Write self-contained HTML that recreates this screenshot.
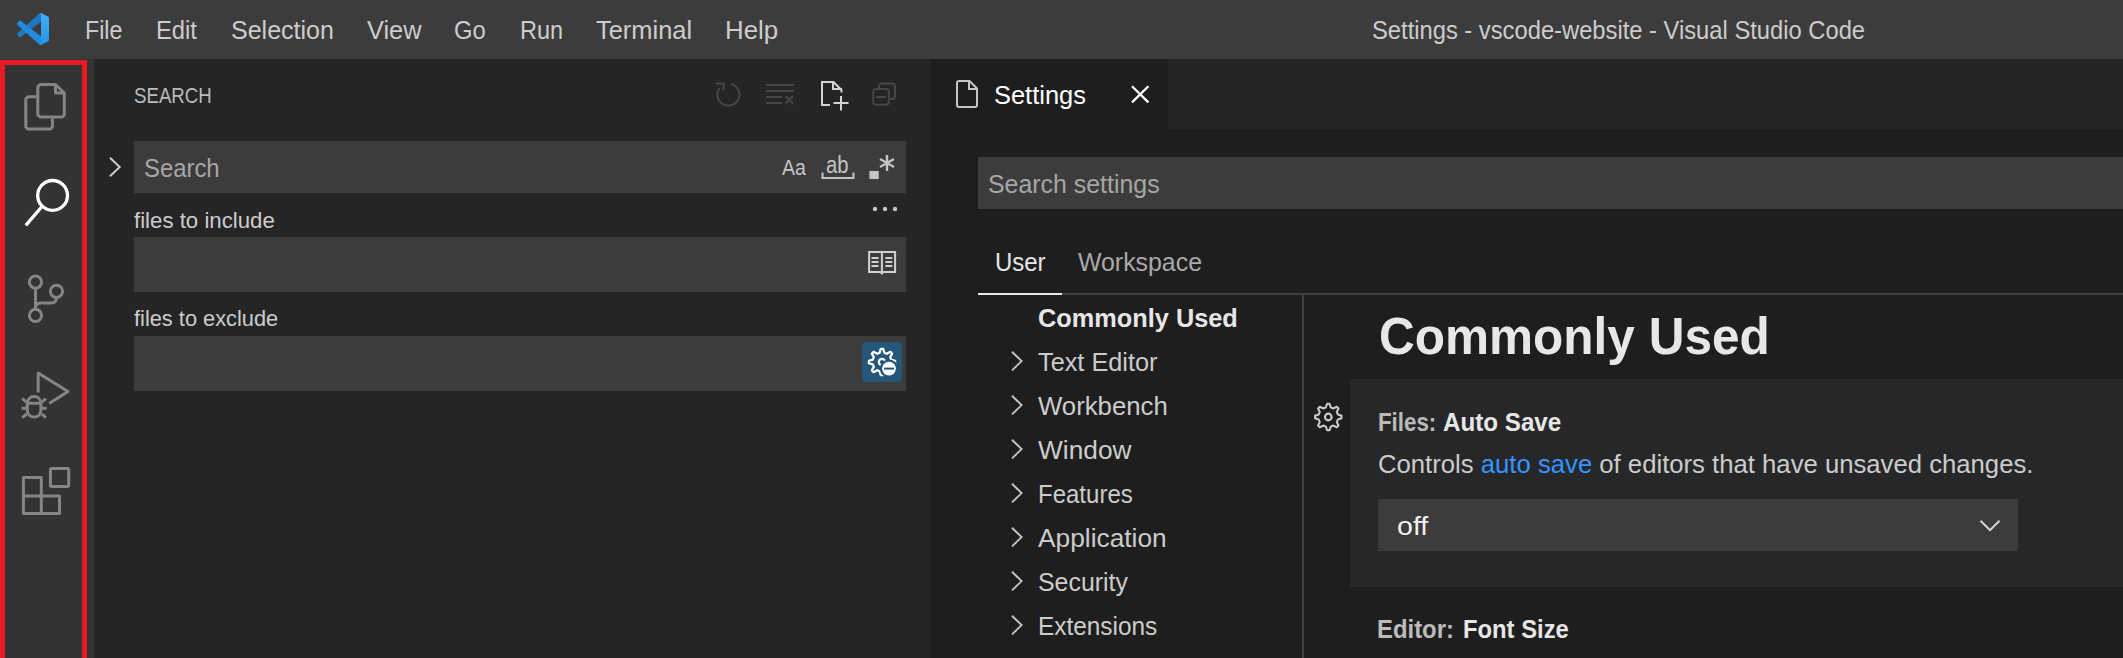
<!DOCTYPE html>
<html><head><meta charset="utf-8"><title>Settings - vscode-website - Visual Studio Code</title>
<style>
html,body{margin:0;padding:0;width:2123px;height:658px;overflow:hidden;background:#1e1e1e;}
body{position:relative;font-family:"Liberation Sans",sans-serif;}
.r{position:absolute;}
.t{position:absolute;white-space:nowrap;line-height:1;transform-origin:0 0;font-family:"Liberation Sans",sans-serif;}
svg.ov{position:absolute;left:0;top:0;}
</style></head><body>
<!-- backgrounds -->
<div class="r" style="left:0;top:0;width:2123px;height:59px;background:#3c3c3c"></div>
<div class="r" style="left:0;top:59px;width:94px;height:599px;background:#333333"></div>
<div class="r" style="left:94px;top:59px;width:836px;height:599px;background:#252526"></div>
<div class="r" style="left:930px;top:59px;width:1193px;height:70px;background:#252526"></div>
<div class="r" style="left:930px;top:59px;width:238px;height:70px;background:#1e1e1e"></div>
<!-- red highlight box -->
<div class="r" style="left:0;top:60px;width:77px;height:610px;border:5px solid #e81b23;"></div>
<!-- inputs -->
<div class="r" style="left:134px;top:141px;width:772px;height:52px;background:#3c3c3c"></div>
<div class="r" style="left:134px;top:237px;width:772px;height:55px;background:#3c3c3c"></div>
<div class="r" style="left:134px;top:336px;width:772px;height:55px;background:#3c3c3c"></div>
<div class="r" style="left:862px;top:342px;width:40px;height:40px;border-radius:4px;background:#245779"></div>
<div class="r" style="left:978px;top:157px;width:1145px;height:52px;background:#3c3c3c"></div>
<!-- settings tabs border -->
<div class="r" style="left:978px;top:293px;width:1145px;height:2px;background:#3e3e3e"></div>
<div class="r" style="left:978px;top:293px;width:84px;height:2px;background:#e7e7e7"></div>
<div class="r" style="left:1302px;top:295px;width:2px;height:363px;background:#3f3f3f"></div>
<!-- focused row -->
<div class="r" style="left:1350px;top:379px;width:773px;height:208px;background:#262729"></div>
<div class="r" style="left:1378px;top:499px;width:640px;height:52px;background:#3c3c3c"></div>

<svg class="ov" width="2123" height="658" viewBox="0 0 2123 658" fill="none" stroke-linecap="butt" stroke-linejoin="miter">
  <defs>
    <linearGradient id="lg" x1="0" y1="0" x2="0" y2="1">
      <stop offset="0" stop-color="#46aef5"/><stop offset="1" stop-color="#2196ea"/>
    </linearGradient>
  </defs>
  <!-- VS Code logo -->
  <g transform="translate(17,13) scale(0.32)">
    <path fill="#1f77c0" d="M96.4614 10.7962L75.8569 0.875542C73.4719 -0.272773 70.6217 0.211611 68.75 2.08333L1.29858 63.5832C-0.515693 65.2373 -0.513607 68.0937 1.30308 69.7452L6.81272 74.754C8.29793 76.1042 10.5347 76.2036 12.1338 74.9905L93.3609 13.3699C96.0859 11.3026 100 13.2462 100 16.6667V16.4275C100 14.0265 98.6246 11.8378 96.4614 10.7962Z"/>
    <path fill="#1f8ddc" d="M96.4614 89.2038L75.8569 99.1245C73.4719 100.273 70.6217 99.7884 68.75 97.9167L1.29858 36.4169C-0.515693 34.7627 -0.513607 31.9063 1.30308 30.2548L6.81272 25.246C8.29793 23.8958 10.5347 23.7964 12.1338 25.0095L93.3609 86.6301C96.0859 88.6974 100 86.7538 100 83.3334V83.5726C100 85.9735 98.6246 88.1622 96.4614 89.2038Z"/>
    <path fill="url(#lg)" d="M75.8578 99.1263C73.4721 100.274 70.6219 99.7885 68.75 97.9166C71.0564 100.223 75 98.5895 75 95.3278V4.67213C75 1.41039 71.0564 -0.223106 68.75 2.08329C70.6219 0.211402 73.4721 -0.273666 75.8578 0.873633L96.4587 10.7807C98.6234 11.8217 100 14.0112 100 16.4132V83.5871C100 85.9893 98.6234 88.1788 96.4586 89.2198L75.8578 99.1263Z"/>
  </g>
  <!-- activity bar icons -->
  <g stroke="#858585" stroke-width="3" stroke-linejoin="round">
    <!-- explorer -->
    <path d="M40 84.5 H55.5 L64.3 93 V115 L62.3 117 H40 L37.8 115 V86.7 Z"/>
    <path d="M55.5 84.5 V93 H64.3"/>
    <path d="M36.5 96.7 H28 L25.8 98.9 V127 L27.9 129.1 H50.3 L52.4 127 V118.5"/>
    <!-- scm -->
    <circle cx="35.5" cy="282.1" r="6.1"/>
    <circle cx="35.5" cy="315.4" r="6.1"/>
    <circle cx="56.5" cy="291.3" r="6.1"/>
    <path d="M35.5 288.2 V309.3"/>
    <path d="M56.5 297.4 C56.5 301.5 54 303.1 50 303.1 H41 C37.5 303.1 35.5 305 35.5 308"/>
    <!-- debug -->
    <path d="M38.2 392.5 V373 L68 391.5 L49.2 403.5"/>
    <path d="M27.3 404 C27.3 399.3 30.4 396.6 34.1 396.6 C37.8 396.6 40.9 399.3 40.9 404 V410 C40.9 414.2 37.9 417 34.1 417 C30.3 417 27.3 414.2 27.3 410 Z"/>
    <path d="M27.5 403.3 H40.7 M22.3 398.7 L26.5 402.2 M46 398.7 L41.8 402.2 M21.6 408.3 H26.5 M41.7 408.3 H46.6 M22.3 417.6 L26.6 414 M46 417.6 L41.7 414"/>
    <!-- extensions -->
    <path d="M23.4 477.4 H41.3 V496 H59.5 V513.5 H23.4 Z M23.4 496 H41.3 V513.5"/>
    <rect x="50.4" y="468.5" width="18.3" height="17.9" rx="1.5"/>
  </g>
  <!-- search icon (active) -->
  <g stroke="#ffffff" stroke-width="3.3">
    <circle cx="52.6" cy="195.4" r="14.9"/>
    <path d="M42 206.5 L25.8 225.3"/>
  </g>
  <!-- sidebar header actions -->
  <g stroke="#474747" stroke-width="2">
    <path d="M731 83.9 A11 11 0 1 1 719.6 88"/>
    <path d="M716 83.5 H723.5 V90"/>
    <path d="M766 85 H794 M766 91 H794 M766 97 H782 M766 103 H782 M785.5 96 L793 103.5 M793 96 L785.5 103.5"/>
    <path d="M879 89 V86 A3 3 0 0 1 882 83.4 H892 A3 3 0 0 1 895 86.4 V96 A3 3 0 0 1 892 99 H889.6"/>
    <rect x="873.2" y="89" width="15.6" height="15.8" rx="3"/>
    <path d="M876 97 H886"/>
  </g>
  <g stroke="#d4d4d4" stroke-width="2">
    <path d="M822 106 V82 H833.5 L841.5 90 V92.5"/>
    <path d="M833 82 V89 H842"/>
    <path d="M821 105 H830"/>
    <path d="M833.5 103 H848.5 M841 96 V110.5"/>
  </g>
  <!-- sidebar search chevron -->
  <path d="M110 157.8 L119.7 167 L110 176.2" stroke="#d0d0d0" stroke-width="1.9"/>
  <!-- ab / regex -->
  <g stroke="#c5c5c5" stroke-width="2">
    <path d="M822.5 172.5 V178 H853.5 V172.5"/>
  </g>
  <rect x="869.4" y="171" width="9.3" height="8" fill="#c5c5c5"/>
  <g stroke="#c5c5c5" stroke-width="2.4">
    <path d="M887 155 V171 M880 159 L894 167 M894 159 L880 167"/>
  </g>
  <!-- ... -->
  <g fill="#c5c5c5"><circle cx="875" cy="209" r="2.2"/><circle cx="885" cy="209" r="2.2"/><circle cx="895" cy="209" r="2.2"/></g>
  <!-- book -->
  <g stroke="#d0d0d0" stroke-width="2">
    <path d="M869.1 251.9 H881.9 V272 H869.1 Z M881.9 251.9 H895.1 V272 H881.9"/>
    <path d="M871.5 258 H878.5 M871.5 262 H878.5 M871.5 266 H878.5 M885.4 258 H892.3 M885.4 262 H892.3 M885.4 266 H892.3"/>
  </g>
  <path d="M879.5 272.5 L881.9 275 L884.3 272.5 Z" fill="#d0d0d0"/>
  <!-- gear minus -->
  <path d="M879.64 352.80 L880.76 348.86 L883.24 348.86 L884.36 352.80 L886.84 353.82 L890.41 351.83 L892.17 353.59 L890.18 357.16 L891.20 359.64 L895.14 360.76 L895.14 363.24 L891.20 364.36 L890.18 366.84 L892.17 370.41 L890.41 372.17 L886.84 370.18 L884.36 371.20 L883.24 375.14 L880.76 375.14 L879.64 371.20 L877.16 370.18 L873.59 372.17 L871.83 370.41 L873.82 366.84 L872.80 364.36 L868.86 363.24 L868.86 360.76 L872.80 359.64 L873.82 357.16 L871.83 353.59 L873.59 351.83 L877.16 353.82 Z" stroke="#ffffff" stroke-width="2.2" stroke-linejoin="round" transform="rotate(0 882 362)"/>
  <circle cx="882" cy="362" r="3.2" stroke="#ffffff" stroke-width="2.2"/>
  <circle cx="889" cy="368.6" r="9.2" fill="#245779"/>
  <circle cx="889" cy="368.6" r="6.9" fill="#ffffff"/>
  <path d="M884 368.6 H894" stroke="#245779" stroke-width="2"/>
  <!-- editor tab icons -->
  <g stroke="#c5c5c5" stroke-width="2">
    <path d="M959 81 H969.5 L977 88.5 V105 A2 2 0 0 1 975 107 H959 A2 2 0 0 1 957 105 V83 A2 2 0 0 1 959 81 Z"/>
    <path d="M969 81 V89 H977"/>
  </g>
  <path d="M1132 86.3 L1148.4 102.4 M1148.4 86.3 L1132 102.4" stroke="#ffffff" stroke-width="2.3"/>
  <!-- tree chevrons -->
  <g stroke="#c5c5c5" stroke-width="1.9">
    <path d="M1012 351.8 L1021.6 361.1 L1012 370.4"/>
    <path d="M1012 395.8 L1021.6 405.1 L1012 414.4"/>
    <path d="M1012 439.8 L1021.6 449.1 L1012 458.4"/>
    <path d="M1012 483.8 L1021.6 493.1 L1012 502.4"/>
    <path d="M1012 527.8 L1021.6 537.1 L1012 546.4"/>
    <path d="M1012 571.8 L1021.6 581.1 L1012 590.4"/>
    <path d="M1012 615.8 L1021.6 625.1 L1012 634.4"/>
  </g>
  <!-- setting gear -->
  <path d="M1325.84 407.41 L1327.05 403.76 L1329.55 403.76 L1330.76 407.41 L1333.34 408.48 L1336.78 406.75 L1338.55 408.52 L1336.82 411.96 L1337.89 414.54 L1341.54 415.75 L1341.54 418.25 L1337.89 419.46 L1336.82 422.04 L1338.55 425.48 L1336.78 427.25 L1333.34 425.52 L1330.76 426.59 L1329.55 430.24 L1327.05 430.24 L1325.84 426.59 L1323.26 425.52 L1319.82 427.25 L1318.05 425.48 L1319.78 422.04 L1318.71 419.46 L1315.06 418.25 L1315.06 415.75 L1318.71 414.54 L1319.78 411.96 L1318.05 408.52 L1319.82 406.75 L1323.26 408.48 Z" stroke="#cccccc" stroke-width="2" stroke-linejoin="round"/>
  <circle cx="1328.3" cy="417" r="3.3" stroke="#cccccc" stroke-width="2.2"/>
  <!-- dropdown chevron -->
  <path d="M1980.5 520.8 L1990 530.2 L1999.5 520.8" stroke="#d8d8d8" stroke-width="1.9"/>
</svg>

<!-- ab text -->
<div class="t" style="left:85.0px;top:16.8px;font-size:26px;color:#cccccc;transform:scaleX(0.8929);">File</div>
<div class="t" style="left:156.4px;top:16.8px;font-size:26px;color:#cccccc;transform:scaleX(0.9130);">Edit</div>
<div class="t" style="left:231.4px;top:16.8px;font-size:26px;color:#cccccc;transform:scaleX(0.9626);">Selection</div>
<div class="t" style="left:367.0px;top:16.8px;font-size:26px;color:#cccccc;transform:scaleX(0.9750);">View</div>
<div class="t" style="left:453.9px;top:16.8px;font-size:26px;color:#cccccc;transform:scaleX(0.9143);">Go</div>
<div class="t" style="left:519.6px;top:16.8px;font-size:26px;color:#cccccc;transform:scaleX(0.9042);">Run</div>
<div class="t" style="left:595.9px;top:16.8px;font-size:26px;color:#cccccc;transform:scaleX(0.9776);">Terminal</div>
<div class="t" style="left:725.0px;top:16.8px;font-size:26px;color:#cccccc;transform:scaleX(0.9943);">Help</div>
<div class="t" style="left:1371.6px;top:17.2px;font-size:26px;color:#cccccc;transform:scaleX(0.9130);">Settings - vscode-website - Visual Studio Code</div>
<div class="t" style="left:134.3px;top:84.7px;font-size:22px;color:#bbbbbb;transform:scaleX(0.8478);">SEARCH</div>
<div class="t" style="left:144.0px;top:155.0px;font-size:26px;color:#a6a6a6;transform:scaleX(0.9183);">Search</div>
<div class="t" style="left:782.0px;top:156.8px;font-size:22.5px;color:#c5c5c5;transform:scaleX(0.8679);">Aa</div>
<div class="t" style="left:826.4px;top:153.8px;font-size:23px;color:#c5c5c5;transform:scaleX(0.8769);">ab</div>
<div class="t" style="left:134.3px;top:209.8px;font-size:22px;color:#cccccc;transform:scaleX(1.0101);">files to include</div>
<div class="t" style="left:134.3px;top:308.2px;font-size:22px;color:#cccccc;transform:scaleX(0.9911);">files to exclude</div>
<div class="t" style="left:994.2px;top:82.3px;font-size:26px;color:#ffffff;transform:scaleX(0.9787);">Settings</div>
<div class="t" style="left:988.4px;top:171.2px;font-size:26px;color:#a6a6a6;transform:scaleX(0.9575);">Search settings</div>
<div class="t" style="left:995.0px;top:249.0px;font-size:26px;color:#e7e7e7;transform:scaleX(0.9218);">User</div>
<div class="t" style="left:1078.2px;top:249.0px;font-size:26px;color:#a9a9a9;transform:scaleX(0.9569);">Workspace</div>
<div class="t" style="left:1038.4px;top:304.7px;font-size:26px;color:#e7e7e7;font-weight:bold;transform:scaleX(0.9741);">Commonly Used</div>
<div class="t" style="left:1037.8px;top:348.9px;font-size:26px;color:#cccccc;transform:scaleX(0.9724);">Text Editor</div>
<div class="t" style="left:1037.8px;top:392.9px;font-size:26px;color:#cccccc;transform:scaleX(0.9901);">Workbench</div>
<div class="t" style="left:1037.8px;top:436.9px;font-size:26px;color:#cccccc;transform:scaleX(1.0108);">Window</div>
<div class="t" style="left:1037.8px;top:480.9px;font-size:26px;color:#cccccc;transform:scaleX(0.9233);">Features</div>
<div class="t" style="left:1037.8px;top:524.9px;font-size:26px;color:#cccccc;transform:scaleX(1.0118);">Application</div>
<div class="t" style="left:1037.8px;top:568.9px;font-size:26px;color:#cccccc;transform:scaleX(0.9574);">Security</div>
<div class="t" style="left:1037.8px;top:612.9px;font-size:26px;color:#cccccc;transform:scaleX(0.9378);">Extensions</div>
<div class="t" style="left:1379.0px;top:310.0px;font-size:52px;color:#e7e7e7;font-weight:bold;transform:scaleX(0.9524);">Commonly Used</div>
<div class="t" style="left:1377.6px;top:409.4px;font-size:26px;color:#bbbbbb;font-weight:bold;transform:scaleX(0.8574);">Files:</div>
<div class="t" style="left:1443.4px;top:409.4px;font-size:26px;color:#e7e7e7;font-weight:bold;transform:scaleX(0.9299);">Auto Save</div>
<div class="t" style="left:1377.5px;top:450.9px;font-size:26px;color:#cccccc;transform:scaleX(0.9879);"><span style="color:#cccccc">Controls </span><span style="color:#3794ff">auto save</span><span style="color:#cccccc"> of editors that have unsaved changes.</span></div>
<div class="t" style="left:1396.5px;top:513.0px;font-size:26px;color:#f0f0f0;transform:scaleX(1.1000);">off</div>
<div class="t" style="left:1377.4px;top:616.2px;font-size:26px;color:#bbbbbb;font-weight:bold;transform:scaleX(0.9179);">Editor:</div>
<div class="t" style="left:1463.3px;top:616.2px;font-size:26px;color:#e7e7e7;font-weight:bold;transform:scaleX(0.9155);">Font Size</div>
</body></html>
